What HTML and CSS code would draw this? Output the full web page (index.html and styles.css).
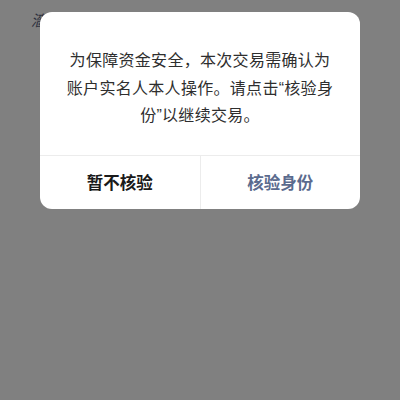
FILE: index.html
```html
<!DOCTYPE html>
<html lang="zh-CN">
<head>
<meta charset="utf-8">
<link rel="stylesheet" href="styles.css">
</head>
<body>
<div class="page">
  <span class="behind">濇</span>
  <div class="dialog">
    <div class="message">为保障资金安全，本次交易需确认为<br>账户实名人本人操作。请点击“核验身<br>份”以继续交易。</div>
    <div class="actions">
      <div class="btn cancel">暂不核验</div>
      <div class="btn confirm">核验身份</div>
    </div>
  </div>
</div>
</body>
</html>
```

FILE: styles.css
```css
html, body {
  margin: 0;
  padding: 0;
  background: #808080;
  width: 400px;
  height: 400px;
  overflow: hidden;
  font-family: "Noto Sans CJK SC", sans-serif;
}
.page {
  position: relative;
  width: 400px;
  height: 400px;
  padding-top: 12px;
  box-sizing: border-box;
}
.behind {
  position: absolute;
  left: 31px;
  top: 10px;
  font-size: 15px;
  line-height: 20px;
  color: #2b2f3d;
  font-style: italic;
}
.dialog {
  position: relative;
  margin: 0 40px;
  background: #fff;
  border-radius: 12px;
  overflow: hidden;
}
.message {
  padding: 35px 20px 25px;
  font-family: "Liberation Sans", "Noto Sans CJK SC", sans-serif;
  font-size: 16px;
  letter-spacing: 0.3px;
  line-height: 27.5px;
  color: #2e2e2e;
  text-align: center;
  white-space: nowrap;
}
.actions {
  display: flex;
  border-top: 1px solid #ececec;
  height: 54px;
  box-sizing: border-box;
}
.btn {
  flex: 1;
  display: flex;
  align-items: center;
  justify-content: center;
  font-size: 16.5px;
  font-weight: 700;
}
.cancel {
  color: #1a1a1a;
  border-right: 1px solid #ececec;
}
.confirm {
  color: #5b6b8e;
}
```
